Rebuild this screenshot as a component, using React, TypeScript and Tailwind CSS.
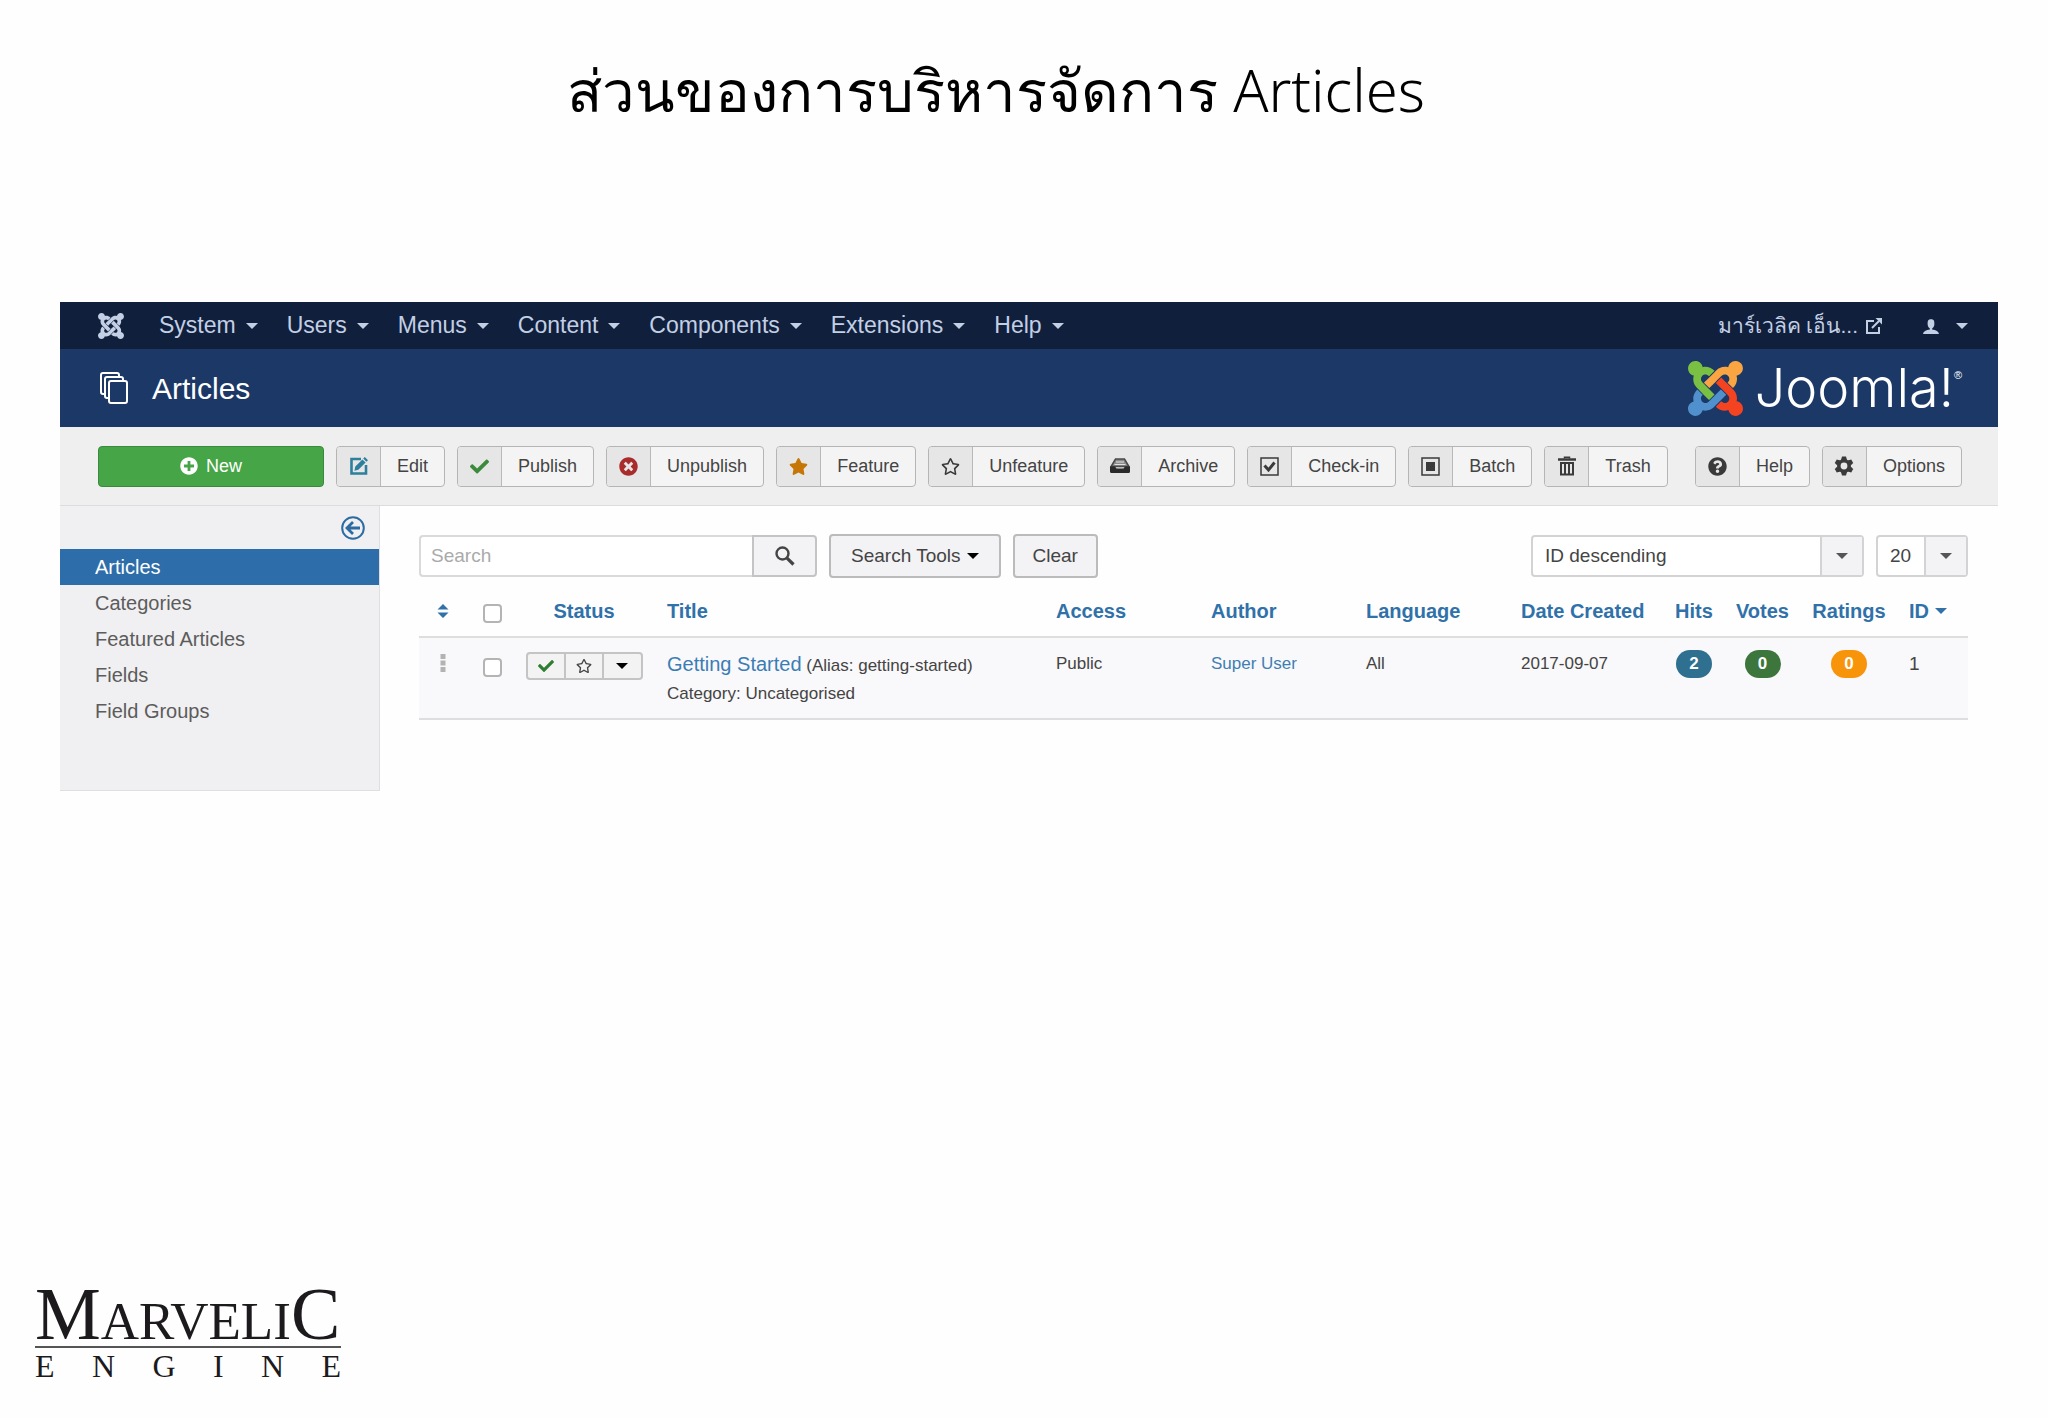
import {ReactNode, useState} from "react";
import {FaCheck, FaPlusCircle, FaQuestionCircle, FaRegStar, FaStar, FaTimesCircle} from "react-icons/fa";
import {ImUser} from "react-icons/im";

const joomlaArms = [
  {color: "#7ac143", d: "M.6 92.1C.6 58.8 27.4 32 60.4 32c30 0 54.5 21.9 59.2 50.2 32.6-7.6 67.1.6 96.5 30l-44.3 44.3c-20.5-20.5-42.6-16.3-55.4-3.5-14.3 14.3-14.3 37.9 0 52.2l99.5 99.5-44 44.3c-87.7-87.2-49.7-49.7-99.8-99.7-26.8-26.5-35-64.8-24.8-98.9C20.4 144.6.6 120.7.6 92.1z"},
  {color: "#f9a541", d: "M130.1 208.5l44.3 44.3c10-10 89.7-89.7 99.7-99.8 14.3-14.3 37.6-14.3 51.9 0 12.8 12.8 17 35-3.5 55.4l44 44.3c31.2-31.2 38.5-67.6 28.9-101.2 29.2-4.1 51.9-29.2 51.9-59.5 0-33.2-26.8-60.1-59.8-60.1-30.3 0-55.4 22.5-59.5 51.6-33.8-9.9-71.7-1.5-98.3 25.1-18.3 19.1-71.1 71.5-99.6 99.9z"},
  {color: "#f44321", d: "M396.4 360.7c8.2-32.7-.9-68.5-26.3-93.9-11.8-12.2 5 4.7-99.5-99.7l-44.3 44.3 99.7 99.7c14.3 14.3 14.3 37.6 0 51.9-12.8 12.8-35 17-55.4-3.5l-44 44.3c27.6 30.2 68 38.8 102.7 28 5.5 27.4 29.7 48.1 58.9 48.1 33 0 59.8-26.8 59.8-60.1 0-30.2-22.5-55-51.6-59.1z"},
  {color: "#5091cd", d: "M312.1 307.6l-44-44.3c-87 86.4-50.4 50.4-99.7 99.8-14.3 14.3-37.6 14.3-51.9 0-13.1-13.4-16.9-35.3 3.2-55.4l-44-44.3c-30.2 30.2-38 65.2-29.5 98.3-26.7 6-46.2 29.9-46.2 58.2C0 453.2 26.8 480 59.8 480c28.6 0 52.5-19.8 58.6-46.7 32.7 8.2 68.5-.6 94.2-26 32.1-32.2 12.2-12.4 99.5-99.7z"},
];

const JoomlaMark = ({className, mono}: { className: string, mono?: boolean }) => (
  <svg viewBox="0 32 448 448" className={className} aria-hidden="true">
    {joomlaArms.map((arm) => (
      <path key={arm.color} d={arm.d} fill={mono ? "currentColor" : arm.color}/>
    ))}
  </svg>
);

const Caret = ({className = ""}: { className?: string }) => (
  <svg viewBox="0 0 12 6" className={`h-1.5 w-3 shrink-0 ${className}`} aria-hidden="true">
    <path d="M0 0h12L6 6z" fill="currentColor"/>
  </svg>
);

const CopyIcon = () => (
  <svg viewBox="0 0 28 32" className="h-8 w-7" fill="none" stroke="currentColor" strokeWidth="2" aria-hidden="true">
    <rect x="9" y="9" width="18" height="22" rx="2"/>
    <path d="M9 26H7a2 2 0 0 1-2-2V7a2 2 0 0 1 2-2h14a2 2 0 0 1 2 2v2"/>
    <path d="M5 22H3a2 2 0 0 1-2-2V3a2 2 0 0 1 2-2h14a2 2 0 0 1 2 2v2"/>
  </svg>
);

const EditIcon = () => (
  <svg viewBox="0 0 18 18" className="size-[18px] text-[#2d7f9d]" aria-hidden="true">
    <path d="M11 2H1.500v14.500H16V8" fill="none" stroke="currentColor" strokeWidth="2.600"/>
    <path d="M14.800 0l3.200 3.200-1.600 1.600-3.200-3.200zM12.400 2.400l3.200 3.200-7.200 7.200-4 1 .9-4.200z" fill="currentColor"/>
  </svg>
);

const ArchiveIcon = () => (
  <svg viewBox="0 0 20 16" className="h-4 w-5" aria-hidden="true">
    <path d="M5.500 1h9L19 8.500H1z" fill="#8a8a8a" stroke="#4a4a4a" strokeWidth="1.500"/>
    <path d="M6 4h8M4.500 6.500h11" stroke="#e0e0e0" strokeWidth="1"/>
    <path d="M0 8.500h5l1.500 2h7l1.500-2h5v5a1.500 1.500 0 0 1-1.500 1.500h-17A1.500 1.500 0 0 1 0 13.500z" fill="#2b2b2b"/>
  </svg>
);

const CheckinIcon = () => (
  <svg viewBox="0 0 19 19" className="size-[19px]" fill="none" stroke="currentColor" aria-hidden="true">
    <rect x="1" y="1" width="17" height="17" strokeWidth="1.500"/>
    <path d="M4.500 8.500l4 4.500 6-7.500" strokeWidth="3"/>
  </svg>
);

const BatchIcon = () => (
  <svg viewBox="0 0 19 19" className="size-[19px]" aria-hidden="true">
    <rect x="1" y="1" width="17" height="17" fill="none" stroke="currentColor" strokeWidth="1.500"/>
    <rect x="5" y="5" width="9" height="9" fill="currentColor"/>
  </svg>
);

const TrashIcon = () => (
  <svg viewBox="0 0 18 20" className="h-5 w-[18px]" fill="none" stroke="currentColor" aria-hidden="true">
    <path d="M0 3.500h18" strokeWidth="2.400"/>
    <path d="M6.500 2.500V1.200h5v1.300" strokeWidth="1.500"/>
    <path d="M3 7h12v11.500H3zM7 7v11M11 7v11" strokeWidth="2"/>
  </svg>
);

const GearIcon = () => (
  <svg viewBox="0 0 20 20" className="size-5" aria-hidden="true">
    <circle cx="10" cy="10" r="5.200" fill="none" stroke="currentColor" strokeWidth="3.600"/>
    {[0, 60, 120, 180, 240, 300].map((angle) => (
      <path key={angle} d="M7 4L8 0.500h4L13 4z" fill="currentColor" transform={`rotate(${angle} 10 10)`}/>
    ))}
  </svg>
);

const SearchIcon = () => (
  <svg viewBox="0 0 20 20" className="size-5" fill="none" stroke="currentColor" aria-hidden="true">
    <circle cx="7.500" cy="7.500" r="6" strokeWidth="2.400"/>
    <path d="M11.800 11.800l6.700 6.700" strokeWidth="3.200"/>
  </svg>
);

const ExternalIcon = () => (
  <svg viewBox="0 0 16 16" className="size-4" fill="none" stroke="currentColor" strokeWidth="2" aria-hidden="true">
    <path d="M8 3H1v12h12V9"/>
    <path d="M6 10l7-7"/>
    <path d="M9.500 0H16v6.500z" fill="currentColor" stroke="none"/>
  </svg>
);

const CollapseIcon = () => (
  <svg viewBox="0 0 24 24" className="size-6" fill="none" stroke="currentColor" aria-hidden="true">
    <circle cx="12" cy="12" r="10.800" strokeWidth="2"/>
    <path d="M19 12H7M12 6l-6 6 6 6" strokeWidth="2.800"/>
  </svg>
);

const SortIcon = () => (
  <svg viewBox="0 0 12 14" className="mx-auto h-3.5 w-3" fill="currentColor" aria-hidden="true">
    <path d="M6 0l5.500 5.500h-11zM6 14L.5 8.500h11z"/>
  </svg>
);

const GripIcon = () => (
  <svg viewBox="0 0 6 18" className="mx-auto h-[18px] w-1.5" fill="#b3b3b3" aria-hidden="true">
    <path d="M.5 0h5v5h-5zM.5 6.500h5v5h-5zM.5 13h5v5h-5z"/>
  </svg>
);

const menus = ["System", "Users", "Menus", "Content", "Components", "Extensions", "Help"];

const actions = [
  {label: "Edit", icon: <EditIcon/>},
  {label: "Publish", icon: <FaCheck className="text-[#3c8a3c]"/>},
  {label: "Unpublish", icon: <FaTimesCircle className="text-[#a92b2b]"/>},
  {label: "Feature", icon: <FaStar className="text-[#c67605]"/>},
  {label: "Unfeature", icon: <FaRegStar/>},
  {label: "Archive", icon: <ArchiveIcon/>},
  {label: "Check-in", icon: <CheckinIcon/>},
  {label: "Batch", icon: <BatchIcon/>},
  {label: "Trash", icon: <TrashIcon/>},
];

const sections = ["Articles", "Categories", "Featured Articles", "Fields", "Field Groups"];

const columns = ["Access", "Author", "Language", "Date Created"];

const ToolbarButton = ({label, icon}: { label: string, icon: ReactNode }) => (
  <button type="button"
          className="flex h-[41px] overflow-hidden rounded border border-[#b5b5b5] bg-[#f4f4f4] text-[18px] text-[#444]">
    <span className="flex h-full w-11 items-center justify-center border-r border-[#b9b9b9] bg-[#e7e6e7] text-[19px] text-[#3a3a3a]">
      {icon}
    </span>
    <span className="flex h-full items-center px-4">{label}</span>
  </button>
);

const Badge = ({children, className}: { children: ReactNode, className: string }) => (
  <span className={`inline-flex h-7 w-9 items-center justify-center rounded-full text-[17px] font-bold text-white ${className}`}>
    {children}
  </span>
);

const App = () => {

  const [search, setSearch] = useState("");
  const [checked, setChecked] = useState(false);

  const box = "block size-[19px] mx-auto appearance-none rounded border-2 border-[#b4b4b4] bg-white checked:bg-[#2d6ca2]";

  return (
    <div className="flex min-h-screen flex-col bg-[#fefefe] font-['Liberation_Sans','Noto_Sans',sans-serif] text-[#444]">
      <h1 className="pt-10 pr-14 pb-[162px] text-center font-['Noto_Sans',sans-serif] text-[58px] leading-[100px] font-light text-black">
        ส่วนของการบริหารจัดการ Articles
      </h1>

      <div className="mr-[50px] ml-[60px]">
        <nav className="flex h-[47px] items-center bg-[#10203c] pr-[30px] pl-[38px] text-[23px] text-[#c3cfe4]">
          <a href="#" aria-label="Control Panel"><JoomlaMark className="size-[26px]" mono/></a>
          <div className="ml-[35px] flex gap-[29px]">
            {menus.map((menu) => (
              <a key={menu} href="#" className="flex items-center gap-2.5">{menu}<Caret/></a>
            ))}
          </div>
          <a href="#" className="ml-auto flex items-center gap-2 text-[21px]">มาร์เวลิค เอ็น... <ExternalIcon/></a>
          <button type="button" aria-label="User menu" className="ml-10 flex items-center gap-4">
            <ImUser className="text-[18px]"/><Caret/>
          </button>
        </nav>

        <header className="flex h-[78px] items-center bg-[#1b3867] pr-9 pl-10 text-white">
          <CopyIcon/>
          <h2 className="ml-6 text-[30px]">Articles</h2>
          <div className="ml-auto flex items-center">
            <JoomlaMark className="size-[55px]"/>
            <span className="ml-3 font-['Inter',sans-serif] text-[54px] leading-none font-light">Joomla!</span>
            <sup className="-mt-4 text-[11px]">®</sup>
          </div>
        </header>

        <div className="flex h-[79px] items-center gap-3 border-b border-[#dcdcdc] bg-[#f0eff0] pr-9 pl-[38px]">
          <button type="button"
                  className="flex h-[41px] w-[226px] items-center justify-center gap-2 rounded border border-[#3b8a3b] bg-[#46a546] text-[18px] text-white">
            <FaPlusCircle/>New
          </button>
          {actions.map((action) => (
            <ToolbarButton key={action.label} label={action.label} icon={action.icon}/>
          ))}
          <div className="ml-auto flex gap-3">
            <ToolbarButton label="Help" icon={<FaQuestionCircle/>}/>
            <ToolbarButton label="Options" icon={<GearIcon/>}/>
          </div>
        </div>

        <div className="flex items-start">
          <aside className="w-80 shrink-0 border-r border-b border-[#dfdfe0] bg-[#f0eff1] pb-[61px] text-[20px]">
            <div className="flex h-[43px] items-center justify-end pr-[14px] text-[#2d6ca2]">
              <button type="button" aria-label="Hide sidebar"><CollapseIcon/></button>
            </div>
            <ul>
              {sections.map((section) => (
                <li key={section}>
                  <a href="#"
                     className={section === "Articles"
                       ? "block bg-[#2d6daa] pl-[35px] leading-9 text-white"
                       : "block pl-[35px] leading-9 text-[#5c5c5c]"}>{section}</a>
                </li>
              ))}
            </ul>
          </aside>

          <main className="min-w-0 flex-1 pt-7 pr-[30px] pl-[39px]">
            <div className="flex items-center text-[19px]">
              <form className="flex" onSubmit={(e) => e.preventDefault()}>
                <input type="text" aria-label="Search" placeholder="Search" value={search}
                       onChange={(e) => setSearch(e.target.value)}
                       className="h-[42px] w-[333px] rounded-l border-2 border-r-0 border-[#dadada] bg-white px-2.5 placeholder:text-[#aaa]"/>
                <button type="submit" aria-label="Submit search"
                        className="flex h-[42px] w-[65px] items-center justify-center rounded-r border-2 border-[#c4c4c4] bg-[#f3f2f4]">
                  <SearchIcon/>
                </button>
              </form>
              <button type="button"
                      className="ml-3 flex h-11 items-center gap-1.5 rounded border-2 border-[#bbb] bg-[#f3f2f4] px-5">
                Search Tools<Caret className="text-black"/>
              </button>
              <button type="button" onClick={() => setSearch("")}
                      className="ml-3 h-11 rounded border-2 border-[#bbb] bg-[#f3f2f4] px-[18px]">
                Clear
              </button>
              <div className="relative ml-auto">
                <select aria-label="Sort table by"
                        className="h-[42px] w-[333px] appearance-none rounded border-2 border-[#d3d3d5] bg-white pl-3">
                  <option>ID descending</option>
                </select>
                <span className="pointer-events-none absolute inset-y-0.5 right-0.5 flex w-[42px] items-center justify-center border-l-2 border-[#d3d3d5] bg-[#f3f2f4]">
                  <Caret className="text-[#555]"/>
                </span>
              </div>
              <div className="relative ml-3">
                <select aria-label="Items per page"
                        className="h-[42px] w-[92px] appearance-none rounded border-2 border-[#d3d3d5] bg-white pl-3">
                  <option>20</option>
                </select>
                <span className="pointer-events-none absolute inset-y-0.5 right-0.5 flex w-[42px] items-center justify-center border-l-2 border-[#d3d3d5] bg-[#f3f2f4]">
                  <Caret className="text-[#555]"/>
                </span>
              </div>
            </div>

            <table className="mt-3 w-full table-fixed text-left text-[17px]">
              <colgroup>
                <col className="w-12"/>
                <col className="w-[50px]"/>
                <col className="w-[134px]"/>
                <col/>
                <col className="w-[155px]"/>
                <col className="w-[155px]"/>
                <col className="w-[155px]"/>
                <col className="w-[155px]"/>
                <col className="w-[60px]"/>
                <col className="w-[77px]"/>
                <col className="w-[96px]"/>
                <col className="w-[71px]"/>
              </colgroup>
              <thead>
                <tr className="h-[47px] border-b-2 border-[#dedede] text-[20px] text-[#3071a9]">
                  <th className="pb-1"><a href="#" aria-label="Ordering"><SortIcon/></a></th>
                  <th><input type="checkbox" aria-label="Check all" className={box} checked={checked}
                             onChange={(e) => setChecked(e.target.checked)}/></th>
                  <th className="pb-1 text-center"><a href="#">Status</a></th>
                  <th className="pb-1 pl-4"><a href="#">Title</a></th>
                  {columns.map((column) => (
                    <th key={column} className="pb-1 pl-3 whitespace-nowrap"><a href="#">{column}</a></th>
                  ))}
                  <th className="pb-1 text-center"><a href="#">Hits</a></th>
                  <th className="pb-1 text-center"><a href="#">Votes</a></th>
                  <th className="pb-1 text-center"><a href="#">Ratings</a></th>
                  <th className="pb-1 pl-3"><a href="#" className="flex items-center gap-1.5">ID<Caret/></a></th>
                </tr>
              </thead>
              <tbody>
                <tr className="h-[82px] border-b-2 border-[#dedede] bg-[#f9f8fa] align-top leading-7">
                  <td className="pt-4"><GripIcon/></td>
                  <td className="pt-5"><input type="checkbox" aria-label="Select Getting Started" className={box}
                                              checked={checked}
                                              onChange={(e) => setChecked(e.target.checked)}/></td>
                  <td className="pt-3.5">
                    <div className="mx-auto flex h-7 w-[117px] rounded border-2 border-[#c4c4c4] bg-[#f3f3f3] text-[16px]">
                      <button type="button" aria-label="Unpublish item"
                              className="flex flex-1 items-center justify-center text-[#2f7d32]"><FaCheck/></button>
                      <button type="button" aria-label="Feature item"
                              className="flex flex-1 items-center justify-center border-x-2 border-[#c4c4c4]"><FaRegStar/></button>
                      <button type="button" aria-label="More actions"
                              className="flex flex-1 items-center justify-center text-black"><Caret/></button>
                    </div>
                  </td>
                  <td className="pt-3 pl-4">
                    <a href="#" className="text-[20px] text-[#3a7db5]">Getting Started</a> (Alias: getting-started)
                    <div>Category: Uncategorised</div>
                  </td>
                  <td className="pt-3 pl-3">Public</td>
                  <td className="pt-3 pl-3"><a href="#" className="text-[#3f7fb3]">Super User</a></td>
                  <td className="pt-3 pl-3">All</td>
                  <td className="pt-3 pl-3">2017-09-07</td>
                  <td className="pt-3 text-center"><Badge className="bg-[#2f6f8f]">2</Badge></td>
                  <td className="pt-3 text-center"><Badge className="bg-[#3c763d]">0</Badge></td>
                  <td className="pt-3 text-center"><Badge className="bg-[#f8940a]">0</Badge></td>
                  <td className="pt-3 pl-3 text-[19px]">1</td>
                </tr>
              </tbody>
            </table>
          </main>
        </div>
      </div>

      <footer className="mt-auto ml-[35px] w-[306px] pb-[34px] font-['Liberation_Serif',serif] text-[#1c1a1d]">
        <div className="text-[53px] leading-[50px] whitespace-nowrap">
          <span className="text-[74px]">M</span>ARVELI<span className="text-[74px]">C</span>
        </div>
        <div className="flex justify-between border-t-2 border-[#555] text-[32px] leading-9">
          {["E", "N", "G", "I", "N", "E"].map((letter, i) => <span key={i}>{letter}</span>)}
        </div>
      </footer>
    </div>
  )
}

export default App;
